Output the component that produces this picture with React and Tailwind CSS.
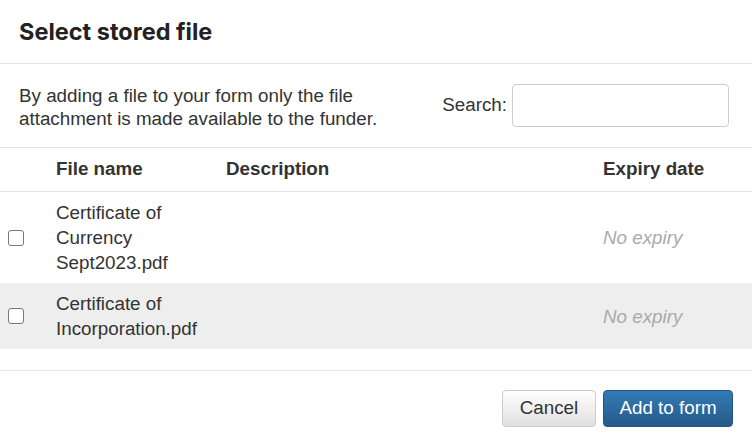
import { useState } from "react";

const files = [
  { id: 1, name: "Certificate of Currency Sept2023.pdf", description: "", expiry: null },
  { id: 2, name: "Certificate of Incorporation.pdf", description: "", expiry: null },
];

const SelectStoredFile = () => {
  const [search, setSearch] = useState("");
  const [selected, setSelected] = useState([]);

  const toggle = (id) =>
    setSelected((prev) =>
      prev.includes(id) ? prev.filter((x) => x !== id) : [...prev, id]
    );

  const visible = files.filter((f) =>
    f.name.toLowerCase().includes(search.toLowerCase())
  );

  return (
    <div
      className="w-[752px] h-[445px] bg-white text-[#333] text-[18.8px] overflow-hidden"
      style={{ fontFamily: '"Liberation Sans", Arial, sans-serif' }}
    >
      {/* Header */}
      <div className="h-[64px] px-[19px] flex items-center border-b border-[#e5e5e5]">
        <h3
          className="text-[23.5px] font-bold text-[#222] leading-none"
          style={{ fontFamily: 'Inter, "Noto Sans", sans-serif' }}
        >
          Select stored file
        </h3>
      </div>

      {/* Intro + search */}
      <div className="pl-[19px] pr-[23px] pt-[20px] h-[83px] flex justify-between items-start">
        <p className="leading-[23px] w-[370px]">
          By adding a file to your form only the file attachment is made
          available to the funder.
        </p>
        <label className="flex items-center gap-[5px]">
          <span>Search:</span>
          <input
            value={search}
            onChange={(e) => setSearch(e.target.value)}
            className="w-[217px] h-[43px] border border-[#ccc] rounded-[4px] px-3 outline-none"
          />
        </label>
      </div>

      {/* Table */}
      <div className="border-t border-[#e5e5e5]">
        <div className="grid grid-cols-[48px_170px_1fr_157px] h-[44px] items-center font-bold border-b border-[#e5e5e5]">
          <div />
          <div className="px-2">File name</div>
          <div className="px-2">Description</div>
          <div className="px-2">Expiry date</div>
        </div>
        {visible.map((f, idx) => (
          <div
            key={f.id}
            className={`grid grid-cols-[48px_170px_1fr_157px] items-center py-2 ${
              idx % 2 === 1 ? "bg-[#eeeeee]" : ""
            }`}
          >
            <div className="pl-2 flex items-center">
              <input
                type="checkbox"
                checked={selected.includes(f.id)}
                onChange={() => toggle(f.id)}
                className="w-[16px] h-[16px] appearance-none border border-[#767676] rounded-[3px] bg-white checked:bg-[#337ab7]"
              />
            </div>
            <div className="px-2 leading-[25px]">{f.name}</div>
            <div className="px-2 leading-[25px]">{f.description}</div>
            <div className="px-2 leading-[25px] italic text-[#aaa]">
              {f.expiry || "No expiry"}
            </div>
          </div>
        ))}
      </div>

      {/* Footer */}
      <div className="mt-[21px] border-t border-[#e5e5e5] pt-[19px] pr-[19px] flex justify-end gap-[7px]">
        <button className="w-[94px] h-[37px] rounded-[4px] border border-[#ccc] bg-gradient-to-b from-white to-[#e0e0e0] text-[#333]">
          Cancel
        </button>
        <button className="w-[130px] h-[37px] rounded-[4px] border border-[#245580] bg-gradient-to-b from-[#337ab7] to-[#265a88] text-white">
          Add to form
        </button>
      </div>
    </div>
  );
};

export default function App() {
  return <SelectStoredFile />;
}
